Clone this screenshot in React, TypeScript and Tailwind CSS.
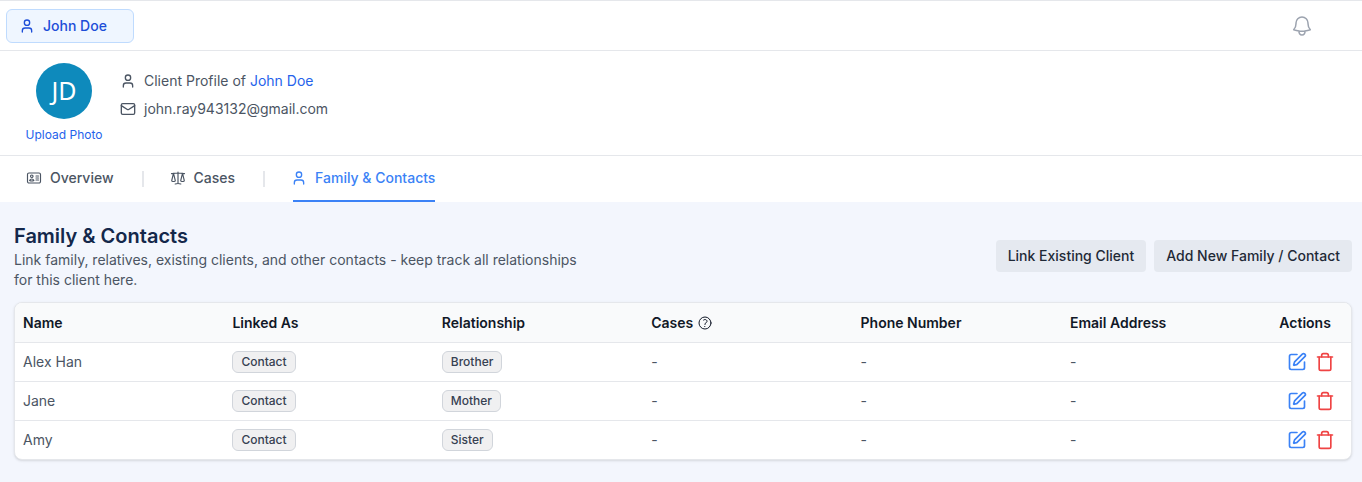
import React from "react";
import {
  HiOutlineBell,
  HiOutlineScale,
  HiOutlineIdentification,
  HiOutlineQuestionMarkCircle,
} from "react-icons/hi2";
import { SquarePen, Trash, User, Mail } from "lucide-react";

const rows = [
  { name: "Alex Han", rel: "Brother" },
  { name: "Jane", rel: "Mother" },
  { name: "Amy", rel: "Sister" },
];

function Badge({ children }: { children: React.ReactNode }) {
  return (
    <span className="inline-flex h-[22px] items-center rounded-md border border-[#d1d5db] bg-[#f0f0f1] px-2 text-xs font-medium text-[#374151]">
      {children}
    </span>
  );
}

export default function App() {
  return (
    <div className="flex h-[482px] flex-col overflow-hidden bg-white font-['Inter',sans-serif]">
      <header className="flex h-[51px] shrink-0 items-center justify-between border-y border-[#e5e7eb] pl-[6px] pr-[48px]">
        <button className="flex h-[34px] w-[128px] items-center gap-2 rounded-md border border-[#bfdbfe] bg-[#eff6ff] pl-3 text-sm font-medium text-[#1d4ed8]">
          <User size={16} />
          John Doe
        </button>
        <HiOutlineBell className="h-[24px] w-[24px] text-[#9ca3af]" />
      </header>

      <section className="flex h-[105px] shrink-0 border-b border-[#e5e7eb] pl-[26px] pt-[12px]">
        <div className="flex w-[76px] flex-col items-center">
          <div className="flex h-14 w-14 items-center justify-center rounded-full bg-[#0e8abc] font-['Noto_Sans',sans-serif] text-[25px] text-white">JD</div>
          <span className="mt-2 text-xs whitespace-nowrap text-[#2563eb]">Upload Photo</span>
        </div>
        <div className="ml-[18px] flex flex-col gap-2 pt-2 text-sm text-[#4b5563]">
          <div className="flex h-5 items-center gap-2">
            <User size={16} className="text-[#4b5563]" />
            <span>
              Client Profile of <span className="text-[#2563eb]">John Doe</span>
            </span>
          </div>
          <div className="flex h-5 items-center gap-2">
            <Mail size={16} className="text-[#4b5563]" />
            <span>john.ray943132@gmail.com</span>
          </div>
        </div>
      </section>

      <nav className="flex h-[46px] shrink-0 items-stretch pl-[26px] text-sm font-medium text-[#4b5563]">
        <div className="flex items-center gap-2 pb-[2px]">
          <HiOutlineIdentification className="h-4 w-4 [&_path]:[stroke-width:1.75]" />
          Overview
        </div>
        <div className="my-auto ml-[28px] mr-[26px] h-4 w-[2px] bg-[#e5e7eb]" />
        <div className="flex items-center gap-2 pb-[2px]">
          <HiOutlineScale className="h-4 w-4 [&_path]:[stroke-width:1.75]" />
          Cases
        </div>
        <div className="my-auto ml-[28px] mr-[28px] h-4 w-[2px] bg-[#e5e7eb]" />
        <div className="flex items-center gap-2 border-b-2 border-[#3b82f6] text-[#3b82f6]">
          <User size={16} className="-ml-[2px]" />
          Family &amp; Contacts
        </div>
      </nav>

      <main className="flex-1 bg-[#f3f6fd] px-[10px] pt-[20px] pl-[14px]">
        <div className="flex items-center justify-between">
          <div className="w-[580px]">
            <h1 className="text-xl leading-7 font-semibold text-[#14284b]">Family &amp; Contacts</h1>
            <p className="text-sm leading-5 text-[#4b5563]">
              Link family, relatives, existing clients, and other contacts - keep track all relationships for this client here.
            </p>
          </div>
          <div className="flex gap-2">
            <button className="h-8 rounded bg-[#e5e9f0] px-3 text-sm font-medium text-[#1f2937]">Link Existing Client</button>
            <button className="h-8 rounded bg-[#e5e9f0] px-3 text-sm font-medium text-[#1f2937]">Add New Family / Contact</button>
          </div>
        </div>

        <div className="mt-[12px] overflow-hidden rounded-lg border border-[#e5e7eb] bg-white shadow-sm">
          <table className="w-full table-fixed border-collapse text-sm">
            <colgroup>
              <col className="w-[209.4px]" />
              <col className="w-[209.4px]" />
              <col className="w-[209.4px]" />
              <col className="w-[209.4px]" />
              <col className="w-[209.4px]" />
              <col className="w-[209.4px]" />
              <col />
            </colgroup>
            <thead>
              <tr className="h-[39px] border-b border-[#e5e7eb] bg-[#f9fafb] text-left text-[#111827]">
                <th className="px-2 pt-px font-semibold">Name</th>
                <th className="px-2 pt-px font-semibold">Linked As</th>
                <th className="px-2 pt-px font-semibold">Relationship</th>
                <th className="px-2 pt-px font-semibold">
                  <span className="flex items-center gap-1">
                    Cases
                    <HiOutlineQuestionMarkCircle className="h-4 w-4" />
                  </span>
                </th>
                <th className="px-2 pt-px font-semibold">Phone Number</th>
                <th className="px-2 pt-px font-semibold">Email Address</th>
                <th className="px-2 pt-px font-semibold">Actions</th>
              </tr>
            </thead>
            <tbody className="text-[#4b5563]">
              {rows.map((r, i) => (
                <tr key={r.name} className={`h-[39px] ${i < 2 ? "border-b border-[#e5e7eb]" : ""}`}>
                  <td className="px-2">{r.name}</td>
                  <td className="px-2"><Badge>Contact</Badge></td>
                  <td className="px-2"><Badge>{r.rel}</Badge></td>
                  <td className="px-2">-</td>
                  <td className="px-2">-</td>
                  <td className="px-2">-</td>
                  <td className="px-2">
                    <div className="flex items-center gap-2 pl-2">
                      <SquarePen size={20} className="text-[#3b82f6]" />
                      <Trash size={20} className="text-[#ef4444]" />
                    </div>
                  </td>
                </tr>
              ))}
            </tbody>
          </table>
        </div>
      </main>
    </div>
  );
}
